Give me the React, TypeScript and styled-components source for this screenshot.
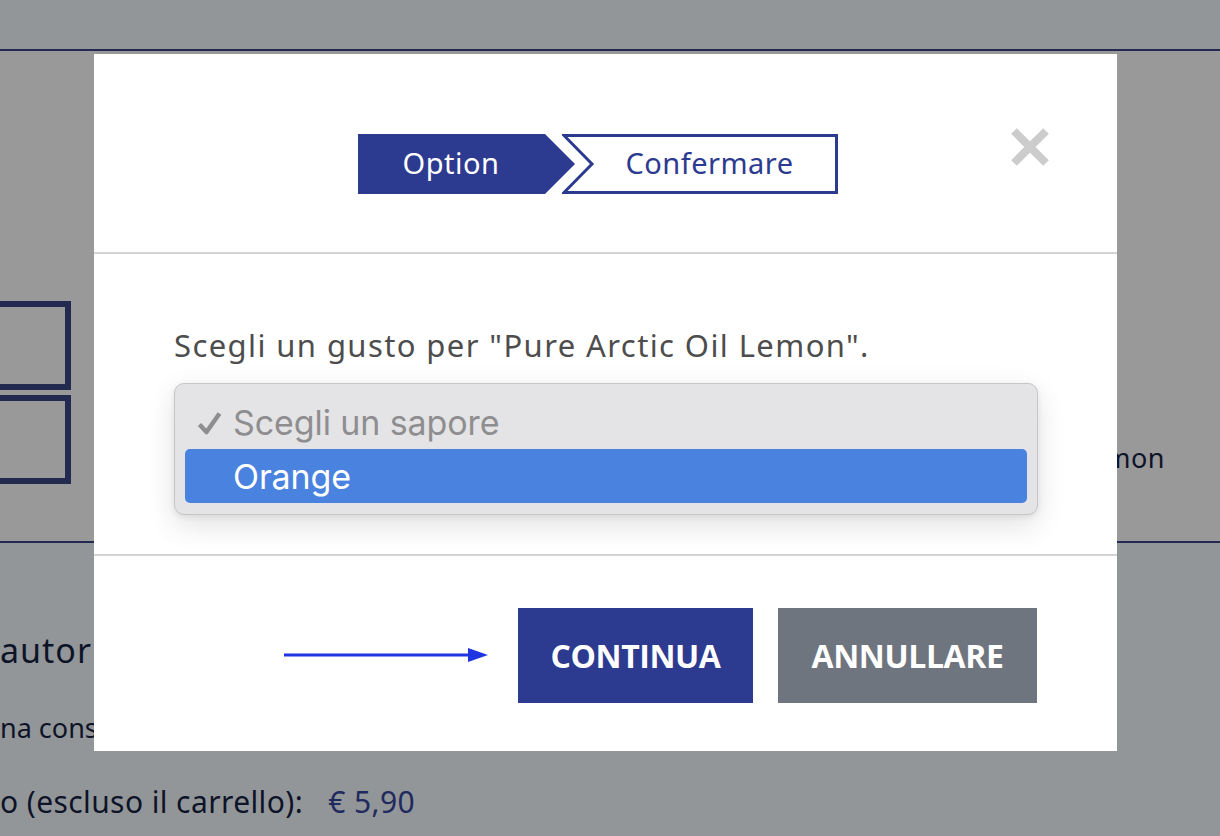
import React from 'react';
import styled, { createGlobalStyle } from 'styled-components';

const GlobalStyle = createGlobalStyle`
  html, body {
    margin: 0;
    padding: 0;
    width: 1220px;
    height: 836px;
    overflow: hidden;
    font-family: "Noto Sans", "Open Sans", sans-serif;
  }
`;

const navy = '#2c3a8f';

// pagina sotto la modale
const Page = styled.div`
  position: relative;
  width: 1220px;
  height: 836px;
  background: #939699;
  overflow: hidden;
`;

const TopBar = styled.header`
  height: 49px;
  background: #939699;
  border-bottom: 2px solid #232a52;
`;

const MainBand = styled.section`
  height: 490px;
  background: #999999;
  border-bottom: 2px solid #232a52;
  display: flex;
  justify-content: space-between;
  align-items: flex-start;
`;

const BoxColumn = styled.div`
  display: flex;
  flex-direction: column;
  gap: 5px;
  margin-top: 250px;
  margin-left: -40px;
`;

const OutlineBox = styled.div`
  width: 111px;
  height: 89px;
  box-sizing: border-box;
  border: 6px solid #222a4f;
`;

const SideText = styled.div`
  margin-top: 388px;
  margin-right: 55px;
  font-size: 27px;
  letter-spacing: 0.5px;
  color: #0e1428;
`;

const BottomBand = styled.section`
  padding-top: 87px;
  color: #0e1428;
`;

const BottomLine = styled.div<{ size: number; gap: number; spacing?: number }>`
  font-size: ${(p) => p.size}px;
  line-height: 1.2;
  letter-spacing: ${(p) => p.spacing ?? 0}px;
  margin-bottom: ${(p) => p.gap}px;
  white-space: nowrap;
`;

const Price = styled.span`
  color: #1f2a5e;
  margin-left: 25px;
`;

// modale
const Modal = styled.div`
  position: absolute;
  left: 94px;
  top: 54px;
  width: 1023px;
  height: 697px;
  background: #fff;
  display: flex;
  flex-direction: column;
`;

const ModalHeader = styled.div`
  position: relative;
  height: 200px;
  box-sizing: border-box;
  padding-top: 80px;
  padding-right: 16px;
  display: flex;
  justify-content: center;
  align-items: flex-start;
  border-bottom: 2px solid #d4d4d4;
`;

const Stepper = styled.div`
  display: flex;
  align-items: center;
`;

const Step = styled.div<{ active?: boolean; w: number }>`
  position: relative;
  width: ${(p) => p.w}px;
  height: 60px;
  display: flex;
  align-items: center;
  justify-content: center;
  font-size: 29px;
  letter-spacing: 0.5px;
  color: ${(p) => (p.active ? '#fff' : navy)};
  svg {
    position: absolute;
    inset: 0;
  }
  span {
    position: relative;
    margin-top: -3px;
  }
`;

const CloseBtn = styled.button`
  position: absolute;
  right: 66px;
  top: 72px;
  width: 42px;
  height: 42px;
  padding: 0;
  border: none;
  background: none;
  cursor: pointer;
`;

const ModalBody = styled.div`
  height: 302px;
  box-sizing: border-box;
  padding: 70px 79px 0 80px;
  border-bottom: 2px solid #d4d4d4;
`;

const Question = styled.p`
  margin: 0 0 17px;
  font-size: 31px;
  line-height: 42px;
  letter-spacing: 1.4px;
  color: #4d4d4d;
`;

const OptionList = styled.div`
  box-sizing: border-box;
  height: 132px;
  padding: 9px 10px 12px;
  background: #e4e4e6;
  border: 1px solid #c6c6c8;
  border-radius: 10px;
  box-shadow: 0 10px 30px rgba(0, 0, 0, 0.12), 0 2px 6px rgba(0, 0, 0, 0.08);
  font-family: Inter, Roboto, "Liberation Sans", sans-serif;
`;

const OptionRow = styled.div<{ selected?: boolean }>`
  position: relative;
  height: 54px;
  display: flex;
  align-items: center;
  padding-left: 48px;
  margin-bottom: 2px;
  border-radius: 5px;
  font-size: 34px;
  letter-spacing: -0.1px;
  color: ${(p) => (p.selected ? '#fff' : '#8e8e90')};
  background: ${(p) => (p.selected ? '#4a82e0' : 'transparent')};
  svg {
    position: absolute;
    left: 12px;
    top: 18px;
  }
`;

const RowLabel = styled.span<{ shift: number }>`
  position: relative;
  top: ${(p) => p.shift}px;
`;

const ModalFooter = styled.div`
  flex: 1;
  display: flex;
  justify-content: flex-end;
  align-items: flex-start;
  padding: 52px 80px 0 0;
  gap: 25px;
`;

const Arrow = styled.svg`
  align-self: flex-start;
  margin-top: 38px;
  margin-right: 5px;
`;

const ActionButton = styled.button<{ variant: 'primary' | 'secondary'; w: number }>`
  width: ${(p) => p.w}px;
  height: 95px;
  border: none;
  color: #fff;
  font-family: "Open Sans", "Noto Sans", sans-serif;
  font-weight: 700;
  font-size: 32px;
  letter-spacing: -0.4px;
  background: ${(p) => (p.variant === 'primary' ? navy : '#6f757f')};
  cursor: pointer;
`;

const App = () => {
  return (
    <>
      <GlobalStyle />
      <Page>
        <TopBar />
        <MainBand>
          <BoxColumn>
            <OutlineBox />
            <OutlineBox />
          </BoxColumn>
          <SideText>Lemon</SideText>
        </MainBand>
        <BottomBand>
          <BottomLine size={34} gap={41} spacing={1}>autorizzazione</BottomLine>
          <BottomLine size={27} gap={40}>na consegna</BottomLine>
          <BottomLine size={30} gap={0} spacing={0.4}>
            o (escluso il carrello):<Price>€ 5,90</Price>
          </BottomLine>
        </BottomBand>

        <Modal>
          <ModalHeader>
            <Stepper>
              <Step active w={217}>
                <svg width="217" height="60" viewBox="0 0 217 60">
                  <polygon points="0,0 187,0 217,30 187,60 0,60" fill={navy} />
                </svg>
                <span style={{ marginRight: 30 }}>Option</span>
              </Step>
              <Step w={276} style={{ marginLeft: -13 }}>
                <svg width="276" height="60" viewBox="0 0 276 60">
                  <polygon
                    points="2,1.5 274.5,1.5 274.5,58.5 2,58.5 30,30"
                    fill="#fff"
                    stroke={navy}
                    strokeWidth="3"
                  />
                </svg>
                <span style={{ marginLeft: 20 }}>Confermare</span>
              </Step>
            </Stepper>
            <CloseBtn aria-label="chiudi">
              <svg width="42" height="42" viewBox="0 0 42 42">
                <path d="M5 5 L37 37 M37 5 L5 37" stroke="#cccccc" strokeWidth="8" />
              </svg>
            </CloseBtn>
          </ModalHeader>

          <ModalBody>
            <Question>Scegli un gusto per "Pure Arctic Oil Lemon".</Question>
            <OptionList>
              <OptionRow>
                <svg width="25" height="24" viewBox="0 0 25 24">
                  <path
                    d="M2.5 13.5 L9.5 21 L22.5 2.5"
                    fill="none"
                    stroke="#8e8e90"
                    strokeWidth="4.5"
                    strokeLinejoin="round"
                  />
                </svg>
                <RowLabel shift={2}>Scegli un sapore</RowLabel>
              </OptionRow>
              <OptionRow selected>
                <RowLabel shift={0}>Orange</RowLabel>
              </OptionRow>
            </OptionList>
          </ModalBody>

          <ModalFooter>
            <Arrow width="204" height="18" viewBox="0 0 204 18">
              <line x1="0" y1="9" x2="186" y2="9" stroke="#1f35e0" strokeWidth="3" />
              <polygon points="184,2 204,9 184,16" fill="#1f35e0" />
            </Arrow>
            <ActionButton variant="primary" w={235}>CONTINUA</ActionButton>
            <ActionButton variant="secondary" w={259}>ANNULLARE</ActionButton>
          </ModalFooter>
        </Modal>
      </Page>
    </>
  );
};

export default App;
